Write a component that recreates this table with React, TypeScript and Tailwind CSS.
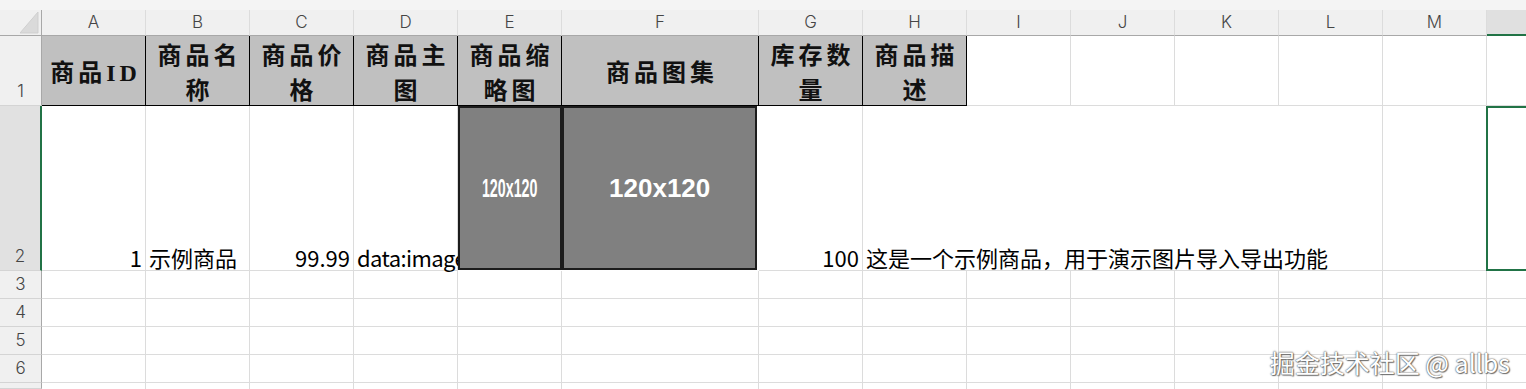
import React from 'react';

const COLS = ['A', 'B', 'C', 'D', 'E', 'F', 'G', 'H', 'I', 'J', 'K', 'L', 'M', 'N'];
const HEADERS = ['商品ID', '商品名称', '商品价格', '商品主图', '商品缩略图', '商品图集', '库存数量', '商品描述'];

const grid = 'grid grid-cols-[42px_104px_104px_104px_104px_104px_197px_104px_104px_104px_104px_104px_104px_104px_104px]';
const gridLine = 'border-r border-b border-[#dcdcdc]';
const cellFont = "font-['Noto_Sans_CJK_SC',sans-serif] text-[22px] leading-[26px] text-black";
const headFont = "font-['Inter','Noto_Sans',sans-serif] font-light text-[17px] text-[#454545]";

const RowHead: React.FC<{ n?: number; active?: boolean }> = ({ n, active }) =>
<div
  className={`flex items-end justify-center pb-[1px] border-b border-[#d4d4d4] ${headFont} ${
  active ?
  'bg-[#e1e1e1] border-r-2 border-r-[#217346] text-[#217346]' :
  'bg-[#f0f0f0] border-r border-r-[#a8a8a8]'}`
  }>

    {n}
  </div>;


const Picture: React.FC<{ wide?: boolean }> = ({ wide }) =>
<div
  className={`h-full flex items-center justify-center bg-[#808080] border-2 border-[#1c1c1c] overflow-hidden ${
  wide ? 'mr-[2px]' : ''}`
  }>

    <span
    className={`font-['Liberation_Sans',sans-serif] font-bold text-[25px] leading-none text-white whitespace-nowrap ${
    wide ? 'scale-x-[1.04]' : 'scale-x-[0.57]'}`
    }>

      120x120
    </span>
  </div>;


const App: React.FC = () => {
  return (
    <div className="relative w-[1526px] h-[389px] overflow-hidden bg-white">
      {/* strip above the sheet */}
      <div className="h-[10px] bg-[#f4f4f4]" />

      <div className={`${grid} grid-rows-[26px_70px_165px_28px_28px_28px_28px_6px]`}>
        {/* column letters */}
        <div className="relative bg-[#f0f0f0] border-r border-b border-[#a8a8a8]">
          <svg className="absolute left-[20px] top-[2px]" width="19" height="22" viewBox="0 0 19 22">
            <polygon points="0,21 18,0 18,21" fill="#dadada" stroke="#cfcfcf" />
          </svg>
        </div>
        {COLS.map((c) =>
        <div
          key={c}
          className={`flex items-center justify-center ${headFont} ${
          c === 'N' ?
          'bg-[#e0e0e0] border-b-2 border-b-[#217346] border-r border-r-[#d4d4d4]' :
          'bg-[#f0f0f0] border-b border-b-[#a8a8a8] border-r border-r-[#dcdcdc]'}`
          }>

            {c === 'N' ? null : c}
          </div>
        )}

        {/* row 1: table headers */}
        <RowHead n={1} />
        {HEADERS.map((h) =>
        <div
          key={h}
          className="flex items-center justify-center pt-[6px] pl-[4px] bg-[#c0c0c0] border-r border-b border-black text-center">

            <span className="font-['Liberation_Serif','Noto_Sans_CJK_SC',serif] font-bold text-[24px] leading-[35px] tracking-[4px] text-[#111]">
              {h}
            </span>
          </div>
        )}
        {['I', 'J', 'K', 'L', 'M', 'N'].map((c) =>
        <div key={c} className={gridLine} />
        )}

        {/* row 2: data */}
        <RowHead n={2} active />
        <div className={`flex items-end justify-end pr-[3px] ${gridLine} ${cellFont}`}>1</div>
        <div className={`flex items-end pl-[3px] ${gridLine} ${cellFont}`}>示例商品</div>
        <div className={`flex items-end justify-end pr-[3px] ${gridLine} ${cellFont}`}>99.99</div>
        <div className={`flex items-end pl-[3px] whitespace-nowrap ${gridLine} ${cellFont}`}>
          <span className="tracking-[-0.6px]">data:image</span>
        </div>
        <div className="pb-[1px]">
          <Picture />
        </div>
        <div className="pb-[1px]">
          <Picture wide />
        </div>
        <div className={`flex items-end justify-end pr-[3px] ${gridLine} ${cellFont}`}>100</div>
        <div className={`relative z-10 flex items-end pl-[3px] whitespace-nowrap border-b border-[#dcdcdc] ${cellFont}`}>
          这是一个示例商品，用于演示图片导入导出功能
        </div>
        <div className="border-b border-[#dcdcdc]" />
        <div className="border-b border-[#dcdcdc]" />
        <div className="border-b border-[#dcdcdc]" />
        <div className={gridLine} />
        <div className={gridLine} />
        <div className="border-2 border-[#217346] -ml-[1px]" />

        {/* empty rows */}
        {[3, 4, 5, 6].map((r) =>
        <React.Fragment key={r}>
            <RowHead n={r} />
            {COLS.map((c) =>
          <div key={c} className={gridLine} />
          )}
          </React.Fragment>
        )}
        <RowHead />
        {COLS.map((c) =>
        <div key={c} className="border-r border-[#dcdcdc]" />
        )}
      </div>

      {/* watermark */}
      <div className="absolute right-[16px] bottom-[14px] font-['Noto_Sans_CJK_SC',sans-serif] text-[25px] leading-none text-white [text-shadow:0_0_1px_#555,0_0_2px_#666,1px_1px_1px_#777]">
        掘金技术社区 @ allbs
      </div>
    </div>);

};

export default App;
